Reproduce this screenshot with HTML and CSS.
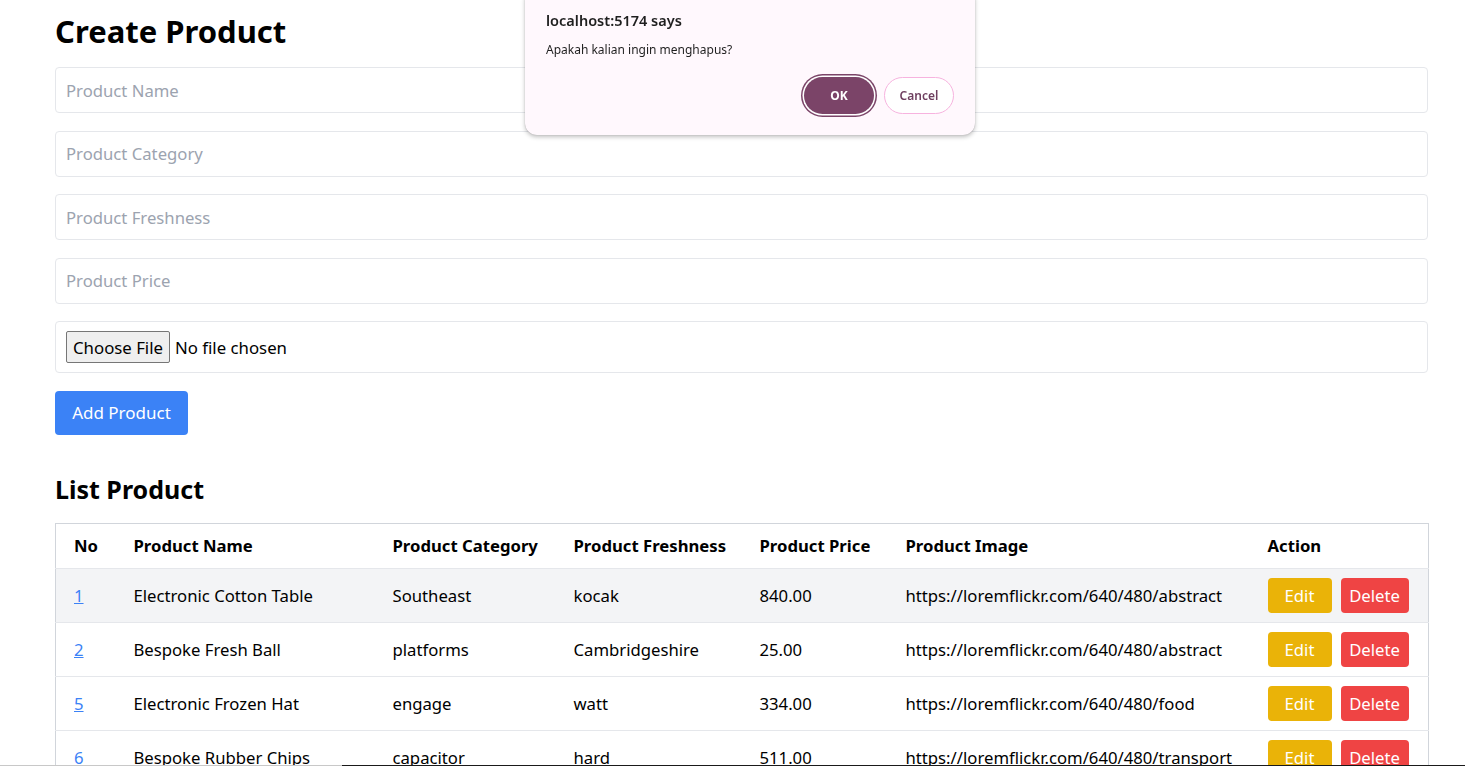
FILE: index.html
```html
<!DOCTYPE html>
<html>
<head>
<meta charset="utf-8">
<link rel="stylesheet" href="styles.css">
</head>
<body>
<main class="page">
  <h1 class="title">Create Product</h1>
  <form class="form">
    <input class="field" type="text" placeholder="Product Name">
    <input class="field" type="text" placeholder="Product Category">
    <input class="field" type="text" placeholder="Product Freshness">
    <input class="field" type="text" placeholder="Product Price">
    <div class="field file-field">
      <span class="file-btn">Choose File</span>
      <span class="file-text">No file chosen</span>
    </div>
    <div class="actions-row">
      <button type="button" class="btn-add">Add Product</button>
    </div>
  </form>

  <h2 class="subtitle">List Product</h2>
  <table class="table">
    <colgroup>
      <col class="c1"><col class="c2"><col class="c3"><col class="c4"><col class="c5"><col class="c6"><col class="c7">
    </colgroup>
    <thead>
      <tr><th>No</th><th>Product Name</th><th>Product Category</th><th>Product Freshness</th><th>Product Price</th><th>Product Image</th><th>Action</th></tr>
    </thead>
    <tbody>
      <tr class="alt"><td><a href="#">1</a></td><td>Electronic Cotton Table</td><td>Southeast</td><td>kocak</td><td>840.00</td><td>https://loremflickr.com/640/480/abstract</td><td><div class="btns"><button class="btn-edit">Edit</button><button class="btn-del">Delete</button></div></td></tr>
      <tr><td><a href="#">2</a></td><td>Bespoke Fresh Ball</td><td>platforms</td><td>Cambridgeshire</td><td>25.00</td><td>https://loremflickr.com/640/480/abstract</td><td><div class="btns"><button class="btn-edit">Edit</button><button class="btn-del">Delete</button></div></td></tr>
      <tr><td><a href="#">5</a></td><td>Electronic Frozen Hat</td><td>engage</td><td>watt</td><td>334.00</td><td>https://loremflickr.com/640/480/food</td><td><div class="btns"><button class="btn-edit">Edit</button><button class="btn-del">Delete</button></div></td></tr>
      <tr><td><a href="#">6</a></td><td>Bespoke Rubber Chips</td><td>capacitor</td><td>hard</td><td>511.00</td><td>https://loremflickr.com/640/480/transport</td><td><div class="btns"><button class="btn-edit">Edit</button><button class="btn-del">Delete</button></div></td></tr>
    </tbody>
  </table>
</main>

<div class="dialog">
  <div class="dialog-title">localhost:5174 says</div>
  <div class="dialog-msg">Apakah kalian ingin menghapus?</div>
  <div class="dialog-btns">
    <button class="dlg-ok">OK</button>
    <button class="dlg-cancel">Cancel</button>
  </div>
</div>

<div class="bottom-line"><span class="bl-gray"></span><span class="bl-dark"></span></div>
</body>
</html>
```
FILE: styles.css
```css
* { box-sizing: border-box; }
html, body { margin: 0; padding: 0; background: #fff; overflow: hidden; }
body { font-family: "Noto Sans", "Open Sans", sans-serif; color: #000; height: 766px; }

.page { padding: 8px 37px 0 55px; }

.title { font-size: 31px; font-weight: 700; margin: 0; line-height: 47px; }

.form { display: flex; flex-direction: column; gap: 17.5px; margin-top: 12px; }
.field {
  height: 46px; width: 100%;
  border: 1px solid #e5e7eb; border-radius: 4px;
  padding: 0 10px; font-family: inherit; font-size: 16.7px; color: #000;
  outline: none; background: #fff;
}
.field::placeholder { color: #9ca3af; }
.file-field { height: 52px; display: flex; align-items: center; gap: 5px; font-size: 16.8px; }
.file-btn {
  height: 32px; padding: 0 6px; display: flex; align-items: center;
  background: #efefef; border: 1px solid #767676; border-radius: 2px; color: #000;
}
.actions-row { display: flex; }
.btn-add {
  height: 44px; width: 133px; border: 0; border-radius: 4px;
  background: #3b82f6; color: #fff; font-family: inherit; font-size: 17px;
}

.subtitle { font-size: 25px; font-weight: 700; margin: 37px 0 0; line-height: 34px; }

.table {
  width: 100%; margin-top: 17px; border-collapse: collapse; table-layout: fixed;
  border: 1px solid #d1d5db; font-size: 16.7px;
}
.c1 { width: 60px; } .c2 { width: 259px; } .c3 { width: 181px; } .c4 { width: 186px; }
.c5 { width: 146px; } .c6 { width: 362px; } .c7 { width: 179px; }
th, td { text-align: left; padding: 0 0 0 18px; white-space: nowrap; }
th { height: 45px; font-weight: 700; }
td { height: 54px; border-top: 1px solid #e5e7eb; }
tr.alt td { background: #f3f4f6; }
td a { color: #3b82f6; text-decoration: underline; }

.btns { display: flex; gap: 9px; }
.btn-edit, .btn-del {
  height: 35px; border: 0; border-radius: 4px; color: #fff;
  font-family: inherit; font-size: 16.7px; padding: 0;
}
.btn-edit { width: 64px; background: #eab308; }
.btn-del { width: 68px; background: #ef4444; }

.dialog {
  position: fixed; left: 525px; top: -12px; width: 450px; height: 147px;
  background: #fff8fd; border-radius: 12px;
  box-shadow: 0 2px 4px rgba(0,0,0,0.25), 0 0 1px rgba(0,0,0,0.3);
  padding: 22px 21px 0;
  font-family: "Noto Sans", sans-serif;
}
.dialog-title { font-size: 14.5px; font-weight: 600; color: #1f1f1f; line-height: 20px; }
.dialog-msg { font-size: 12px; color: #1f1f1f; margin-top: 12px; line-height: 16px; }
.dialog-btns { display: flex; justify-content: flex-end; gap: 8px; margin-top: 19px; padding-right: 0; }
.dlg-ok {
  width: 70px; height: 37px; border-radius: 19px; border: 0;
  background: #7b4468; color: #fff; font-weight: 700; font-size: 12px; font-family: inherit;
  box-shadow: 0 0 0 1.5px #fff, 0 0 0 3px #7b4468;
  margin-right: 2px;
}
.dlg-cancel {
  width: 70px; height: 37px; border-radius: 19px;
  border: 1px solid #f7b3df; background: #fff;
  color: #6e3f5f; font-weight: 600; font-size: 12px; font-family: inherit;
}

.bottom-line { position: fixed; left: 0; right: 0; bottom: 0; height: 1px; display: flex; }
.bl-gray { width: 342px; background: #c8c8c8; }
.bl-dark { flex: 1; background: #1a1a1a; }
```
